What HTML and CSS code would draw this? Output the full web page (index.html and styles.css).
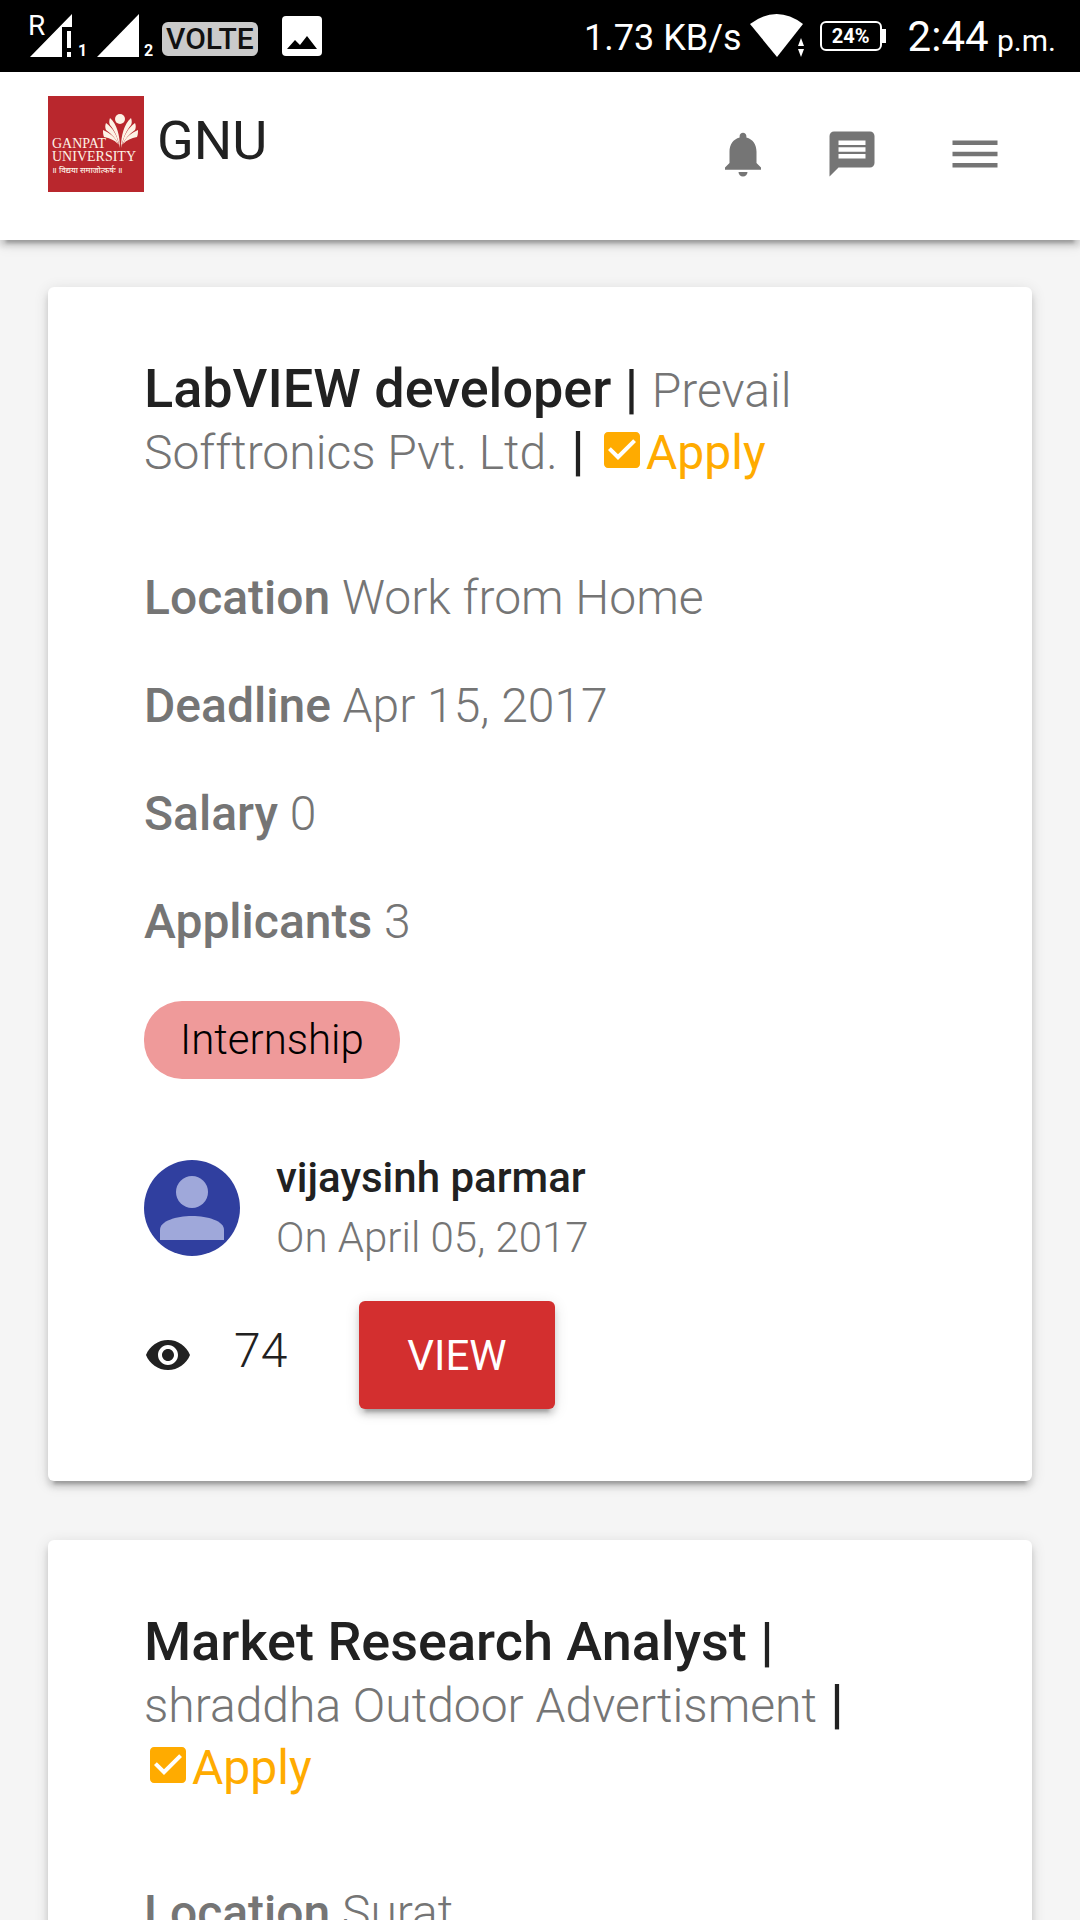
FILE: index.html
```html
<!DOCTYPE html>
<html lang="en">
  <head>
    <meta charset="UTF-8" />
    <meta name="viewport" content="width=device-width, initial-scale=1" />
    <title>GNU</title>
    <link rel="stylesheet" href="styles.css">
  </head>
  <body>
    <div class="status-bar">
      <div class="status-left">
        <svg class="signal" width="134" height="60" viewBox="-4 -8 134 60">
          <text x="0" y="21" class="signal-roaming">R</text>
          <path d="M2 43L44 0v13H34v30z"/>
          <path d="M39 17h4v17h-4zM39 38h4v5h-4z"/>
          <text x="50" y="42" class="signal-sim">1</text>
          <path d="M69 43L111 0v43z"/>
          <text x="116" y="42" class="signal-sim">2</text>
        </svg>
        <span class="volte">VOLTE</span>
        <svg class="picture" width="40" height="40" viewBox="0 0 40 40">
          <rect width="40" height="40" rx="4" fill="#fff"/>
          <path d="M5 33l8-9 5 5 7-9 10 13z" fill="#000"/>
        </svg>
      </div>
      <div class="status-right">
        <span class="speed">1.73 KB/s</span>
        <svg class="wifi" width="56" height="44" viewBox="0 0 56 44">
          <path d="M0 10Q27-10 53 10L27 43z"/>
          <path d="M48 32l3-8 3 8zM48 35h6l-3 8z"/>
        </svg>
        <span class="battery">24%</span>
        <span class="clock">2:44 <small>p.m.</small></span>
      </div>
    </div>

    <header class="navbar">
      <a href="#" class="brand">
        <svg class="logo" width="96" height="96" viewBox="0 0 96 96">
          <rect width="96" height="96" fill="#b9272d"/>
          <g fill="#fdf3e6">
            <circle cx="72" cy="23" r="5"/>
            <path d="M72 52C72 40 69 28 62 22c-1 3-1 5 0 7 5 6 8 13 10 23z"/>
            <path d="M71 49C69 39 65 32 58 27c-1 2-1 5 0 7 6 4 10 9 13 15z"/>
            <path d="M70 48C67 41 62 37 55 34c0 2 0 5 1 7 6 1 10 3 14 7z"/>
            <path d="M73 52C73 40 76 28 83 22c1 3 1 5 0 7-5 6-8 13-10 23z"/>
            <path d="M74 49C76 39 80 32 87 27c1 2 1 5 0 7-6 4-10 9-13 15z"/>
            <path d="M75 48C78 41 83 37 90 34c0 2 0 5-1 7-6 1-10 3-14 7z"/>
            <text x="4" y="52" class="logo-name">GANPAT</text>
            <text x="4" y="65" class="logo-name">UNIVERSITY</text>
            <text x="4" y="77" class="logo-motto">॥ विद्यया समाजोत्कर्षः ॥</text>
          </g>
        </svg>
        <span class="brand-name">GNU</span>
      </a>
      <nav class="nav-icons">
        <button type="button" aria-label="Notifications">
          <svg viewBox="0 0 24 24"><path d="M12 22c1.1 0 2-.9 2-2h-4c0 1.1.9 2 2 2zm6-6v-5c0-3.07-1.63-5.64-4.5-6.32V4c0-.83-.67-1.5-1.5-1.5s-1.5.67-1.5 1.5v.68C7.64 5.36 6 7.92 6 11v5l-2 2v1h16v-1l-2-2z"/></svg>
        </button>
        <button type="button" aria-label="Messages">
          <svg viewBox="0 0 24 24"><path d="M20 2H4c-1.1 0-1.99.9-1.99 2L2 22l4-4h14c1.1 0 2-.9 2-2V4c0-1.1-.9-2-2-2zm-2 12H6v-2h12v2zm0-3H6V9h12v2zm0-3H6V6h12v2z"/></svg>
        </button>
        <button type="button" class="menu" aria-label="Menu">
          <svg viewBox="0 0 24 24"><path d="M2 6h20v2H2zM2 11h20v2H2zM2 16h20v2H2z"/></svg>
        </button>
      </nav>
    </header>

    <main class="feed">
      <article class="card">
        <h2 class="card-title">LabVIEW developer | <span class="company">Prevail Sofftronics Pvt. Ltd.</span> | <a href="#" class="apply"><svg viewBox="0 0 24 24"><path d="M19 3H5c-1.11 0-2 .9-2 2v14c0 1.1.89 2 2 2h14c1.11 0 2-.9 2-2V5c0-1.1-.89-2-2-2zm-9 14l-5-5 1.41-1.41L10 14.17l7.59-7.59L19 8l-9 9z"/></svg>Apply</a></h2>
        <div class="details">
          <p><b>Location</b> Work from Home</p>
          <p><b>Deadline</b> Apr 15, 2017</p>
          <p><b>Salary</b> 0</p>
          <p><b>Applicants</b> 3</p>
        </div>
        <span class="chip">Internship</span>
        <div class="author">
          <svg class="avatar" viewBox="0 0 96 96">
            <circle cx="48" cy="48" r="48" fill="#303f9f"/>
            <circle cx="48" cy="32" r="16" fill="#9fa8da"/>
            <path d="M16 80V70c0-9 16-14 32-14s32 5 32 14v10z" fill="#9fa8da"/>
          </svg>
          <div>
            <div class="author-name">vijaysinh parmar</div>
            <div class="author-date">On April 05, 2017</div>
          </div>
        </div>
        <div class="card-footer">
          <svg class="eye" viewBox="0 0 24 24"><path d="M12 4.5C7 4.5 2.73 7.61 1 12c1.73 4.39 6 7.5 11 7.5s9.27-3.11 11-7.5c-1.73-4.39-6-7.5-11-7.5zM12 17c-2.76 0-5-2.24-5-5s2.24-5 5-5 5 2.24 5 5-2.24 5-5 5zm0-8c-1.66 0-3 1.34-3 3s1.34 3 3 3 3-1.34 3-3-1.34-3-3-3z"/></svg>
          <span class="views">74</span>
          <button type="button" class="btn">VIEW</button>
        </div>
      </article>

      <article class="card">
        <h2 class="card-title">Market Research Analyst | <span class="company">shraddha Outdoor Advertisment</span> | <a href="#" class="apply"><svg viewBox="0 0 24 24"><path d="M19 3H5c-1.11 0-2 .9-2 2v14c0 1.1.89 2 2 2h14c1.11 0 2-.9 2-2V5c0-1.1-.89-2-2-2zm-9 14l-5-5 1.41-1.41L10 14.17l7.59-7.59L19 8l-9 9z"/></svg>Apply</a></h2>
        <div class="details">
          <p><b>Location</b> Surat</p>
        </div>
      </article>
    </main>
  </body>
</html>
```
FILE: styles.css
```css
* {
    box-sizing: border-box;
}

body {
    margin: 0;
    height: 100vh;
    display: flex;
    flex-direction: column;
    background-color: #f5f5f5;
    color: #212121;
    font-family: Roboto, "Liberation Sans", sans-serif;
    font-size: 48px;
    font-weight: 300;
    line-height: 60px;
}

a {
    color: inherit;
    text-decoration: none;
}

button {
    border: none;
    padding: 0;
    background: none;
    font-family: inherit;
    cursor: pointer;
}

/* phone status bar */
.status-bar {
    flex: none;
    height: 72px;
    padding: 0 24px;
    display: flex;
    justify-content: space-between;
    align-items: center;
    background-color: #000;
    color: #fff;
    font-weight: 400;
}

.status-left,
.status-right {
    display: flex;
    align-items: center;
}

.signal,
.wifi {
    fill: #fff;
}

.signal-roaming {
    font-size: 28px;
    font-weight: 400;
}

.signal-sim {
    font-size: 16px;
    font-weight: 700;
}

.volte {
    margin-top: 6px;
    margin-left: 4px;
    padding: 0 4px;
    border-radius: 6px;
    background-color: #cacaca;
    color: #111;
    font-size: 30px;
    font-weight: 500;
    line-height: 34px;
}

.picture {
    margin-left: 24px;
}

.speed {
    padding-top: 4px;
    font-size: 36px;
    margin-right: 8px;
}

.battery {
    position: relative;
    width: 62px;
    margin-left: 14px;
    border: 2px solid #fff;
    border-radius: 6px;
    font-size: 20px;
    font-weight: 700;
    line-height: 26px;
    text-align: center;
}

.battery::after {
    content: "";
    position: absolute;
    right: -6px;
    top: 6px;
    width: 4px;
    height: 14px;
    background-color: #fff;
}

.clock {
    margin-left: 26px;
    padding-top: 6px;
    font-size: 42px;
}

.clock small {
    margin-left: -2px;
    font-size: 30px;
}

/* header */
.navbar {
    position: relative;
    z-index: 1;
    flex: none;
    height: 168px;
    padding: 24px 78px 0 48px;
    display: flex;
    justify-content: space-between;
    align-items: flex-start;
    background-color: #fff;
    box-shadow: 0 6px 6px rgba(0, 0, 0, 0.14), 0 3px 15px rgba(0, 0, 0, 0.12), 0 9px 3px -6px rgba(0, 0, 0, 0.2);
}

.brand {
    display: flex;
    gap: 13px;
}

.brand-name {
    font-size: 54px;
    font-weight: 400;
    line-height: 90px;
}

.logo-name {
    font-family: "Liberation Serif", serif;
    font-size: 14px;
}

.logo-motto {
    font-family: "Noto Sans", sans-serif;
    font-size: 8px;
    font-weight: 500;
}

.nav-icons {
    display: flex;
    gap: 55px;
    padding-top: 31px;
}

.nav-icons button {
    width: 54px;
    height: 54px;
}

.nav-icons svg {
    display: block;
    fill: #757575;
}

.nav-icons .menu {
    margin-left: 14px;
}

/* job cards */
.feed {
    flex: 1;
    min-height: 0;
    padding: 47px 48px;
    overflow-y: auto;
    scrollbar-width: none;
}

.card {
    margin-bottom: 59px;
    padding: 71px 96px 72px;
    border-radius: 6px;
    background-color: #fff;
    box-shadow: 0 6px 6px rgba(0, 0, 0, 0.14), 0 3px 15px rgba(0, 0, 0, 0.12), 0 9px 3px -6px rgba(0, 0, 0, 0.2);
}

.card-title {
    margin: 0 0 86px;
    font-size: 54px;
    font-weight: 500;
    line-height: 62px;
}

.company {
    color: #757575;
    font-size: 48px;
    font-weight: 300;
    line-height: 48px;
}

.apply {
    display: inline-block;
    color: #ffab00;
    font-size: 48px;
    font-weight: 400;
    line-height: 48px;
}

.apply svg {
    width: 48px;
    height: 48px;
    vertical-align: -5px;
    fill: #ffab00;
}

.details {
    color: #757575;
}

.details p {
    margin: 0 0 48px;
}

.details b {
    font-weight: 500;
}

.chip {
    display: block;
    width: fit-content;
    margin-top: 49px;
    padding: 0 36px;
    border-radius: 38px;
    background-color: #ef9a9a;
    color: #000;
    font-size: 42px;
    line-height: 78px;
}

.author {
    display: flex;
    align-items: center;
    gap: 36px;
    margin: 69px 0 33px;
    font-size: 42px;
}

.avatar {
    width: 96px;
    height: 96px;
}

.author-name {
    font-weight: 500;
}

.author-date {
    color: #757575;
}

.card-footer {
    display: flex;
    align-items: center;
}

.eye {
    width: 48px;
    height: 48px;
    fill: #212121;
}

.views {
    margin: 0 72px 8px 42px;
}

.btn {
    height: 108px;
    padding: 0 48px;
    border-radius: 6px;
    background-color: #d32f2f;
    color: #fff;
    font-size: 42px;
    box-shadow: 0 6px 6px rgba(0, 0, 0, 0.14), 0 3px 15px rgba(0, 0, 0, 0.12), 0 9px 3px -6px rgba(0, 0, 0, 0.2);
}
```
